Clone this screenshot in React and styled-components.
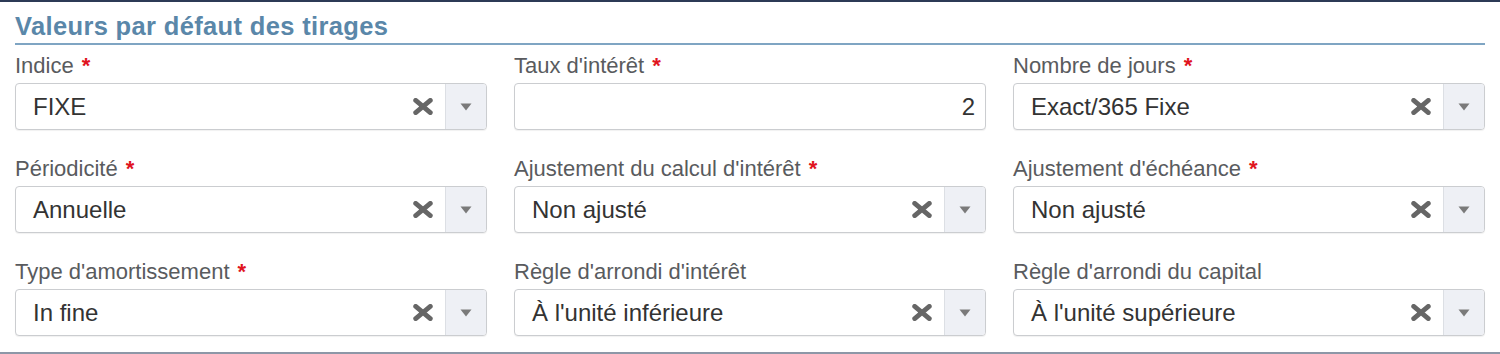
import React from "react";
import styled, { createGlobalStyle } from "styled-components";

const Global = createGlobalStyle`
  html, body { margin: 0; padding: 0; background: #fff; }
  body { font-family: "Liberation Sans", Arial, Helvetica, sans-serif; }
  * { box-sizing: border-box; }
`;

const Panel = styled.section`
  width: 1500px;
  height: 354px;
  border-top: 2px solid #2c3a56;
  border-bottom: 2px solid #8d97a7;
  padding: 0 15px 16px;
  background: #fff;
`;

const Title = styled.h2`
  margin: 9px 0 0;
  padding: 0 0 2px;
  font-size: 25.5px;
  letter-spacing: 0.35px;
  line-height: 30px;
  font-weight: 700;
  color: #5a87a9;
  border-bottom: 2px solid #7fa5c3;
`;

const Grid = styled.div`
  margin-top: 9px;
  display: grid;
  grid-template-columns: repeat(3, 472px);
  column-gap: 27px;
  row-gap: 27px;
`;

const Field = styled.div`
  display: flex;
  flex-direction: column;
`;

const Label = styled.label`
  font-size: 22px;
  line-height: 24px;
  color: #595b5e;
  margin-bottom: 5px;
  white-space: nowrap;
`;

const Req = styled.span`
  color: #e0141e;
  font-weight: 700;
  margin-left: 8px;
`;

const Box = styled.div`
  height: 47px;
  border: 1px solid #cbcdd0;
  border-radius: 4px;
  background: #fff;
  box-shadow: 0 1px 1px rgba(0, 0, 0, 0.06);
  display: flex;
  align-items: stretch;
  overflow: hidden;
`;

const Value = styled.div`
  flex: 1;
  display: flex;
  align-items: center;
  padding-left: 17px;
  font-size: 24px;
  color: #333;
  white-space: nowrap;
`;

const NumberInput = styled.input`
  flex: 1;
  width: 100%;
  border: none;
  outline: none;
  background: transparent;
  font-family: inherit;
  font-size: 24px;
  color: #333;
  text-align: right;
  padding: 0 10px 0 17px;
`;

const Clear = styled.span`
  display: flex;
  align-items: center;
  justify-content: center;
  width: 36px;
  margin-right: 4px;
`;

const Arrow = styled.span`
  width: 41px;
  border-left: 1px solid #dcdfe4;
  background: #eef0f5;
  display: flex;
  align-items: center;
  justify-content: center;
`;

const ClearIcon = () => (
  <svg width="20" height="17" viewBox="0 0 20 17">
    <path
      d="M2.7 2.4 L17.3 14.6 M17.3 2.4 L2.7 14.6"
      stroke="#666"
      strokeWidth="4.8"
      strokeLinecap="round"
      fill="none"
    />
  </svg>
);

const Caret = () => (
  <svg width="12" height="8" viewBox="0 0 12 8">
    <polygon points="0.5,0.5 11.5,0.5 6,7.5" fill="#7a7a7a" />
  </svg>
);

const Select = ({ value }) => (
  <Box>
    <Value>{value}</Value>
    <Clear>
      <ClearIcon />
    </Clear>
    <Arrow>
      <Caret />
    </Arrow>
  </Box>
);

const fields = [
  { label: "Indice", req: true, value: "FIXE" },
  { label: "Taux d'intérêt", req: true, number: "2" },
  { label: "Nombre de jours", req: true, value: "Exact/365 Fixe" },
  { label: "Périodicité", req: true, value: "Annuelle" },
  { label: "Ajustement du calcul d'intérêt", req: true, value: "Non ajusté" },
  { label: "Ajustement d'échéance", req: true, value: "Non ajusté" },
  { label: "Type d'amortissement", req: true, value: "In fine" },
  { label: "Règle d'arrondi d'intérêt", req: false, value: "À l'unité inférieure" },
  { label: "Règle d'arrondi du capital", req: false, value: "À l'unité supérieure" },
];

export default function App() {
  return (
    <>
      <Global />
      <Panel>
        <Title>Valeurs par défaut des tirages</Title>
        <Grid>
          {fields.map((f) => (
            <Field key={f.label}>
              <Label>
                {f.label}
                {f.req && <Req>*</Req>}
              </Label>
              {f.number !== undefined ? (
                <Box>
                  <NumberInput defaultValue={f.number} />
                </Box>
              ) : (
                <Select value={f.value} />
              )}
            </Field>
          ))}
        </Grid>
      </Panel>
    </>
  );
}
